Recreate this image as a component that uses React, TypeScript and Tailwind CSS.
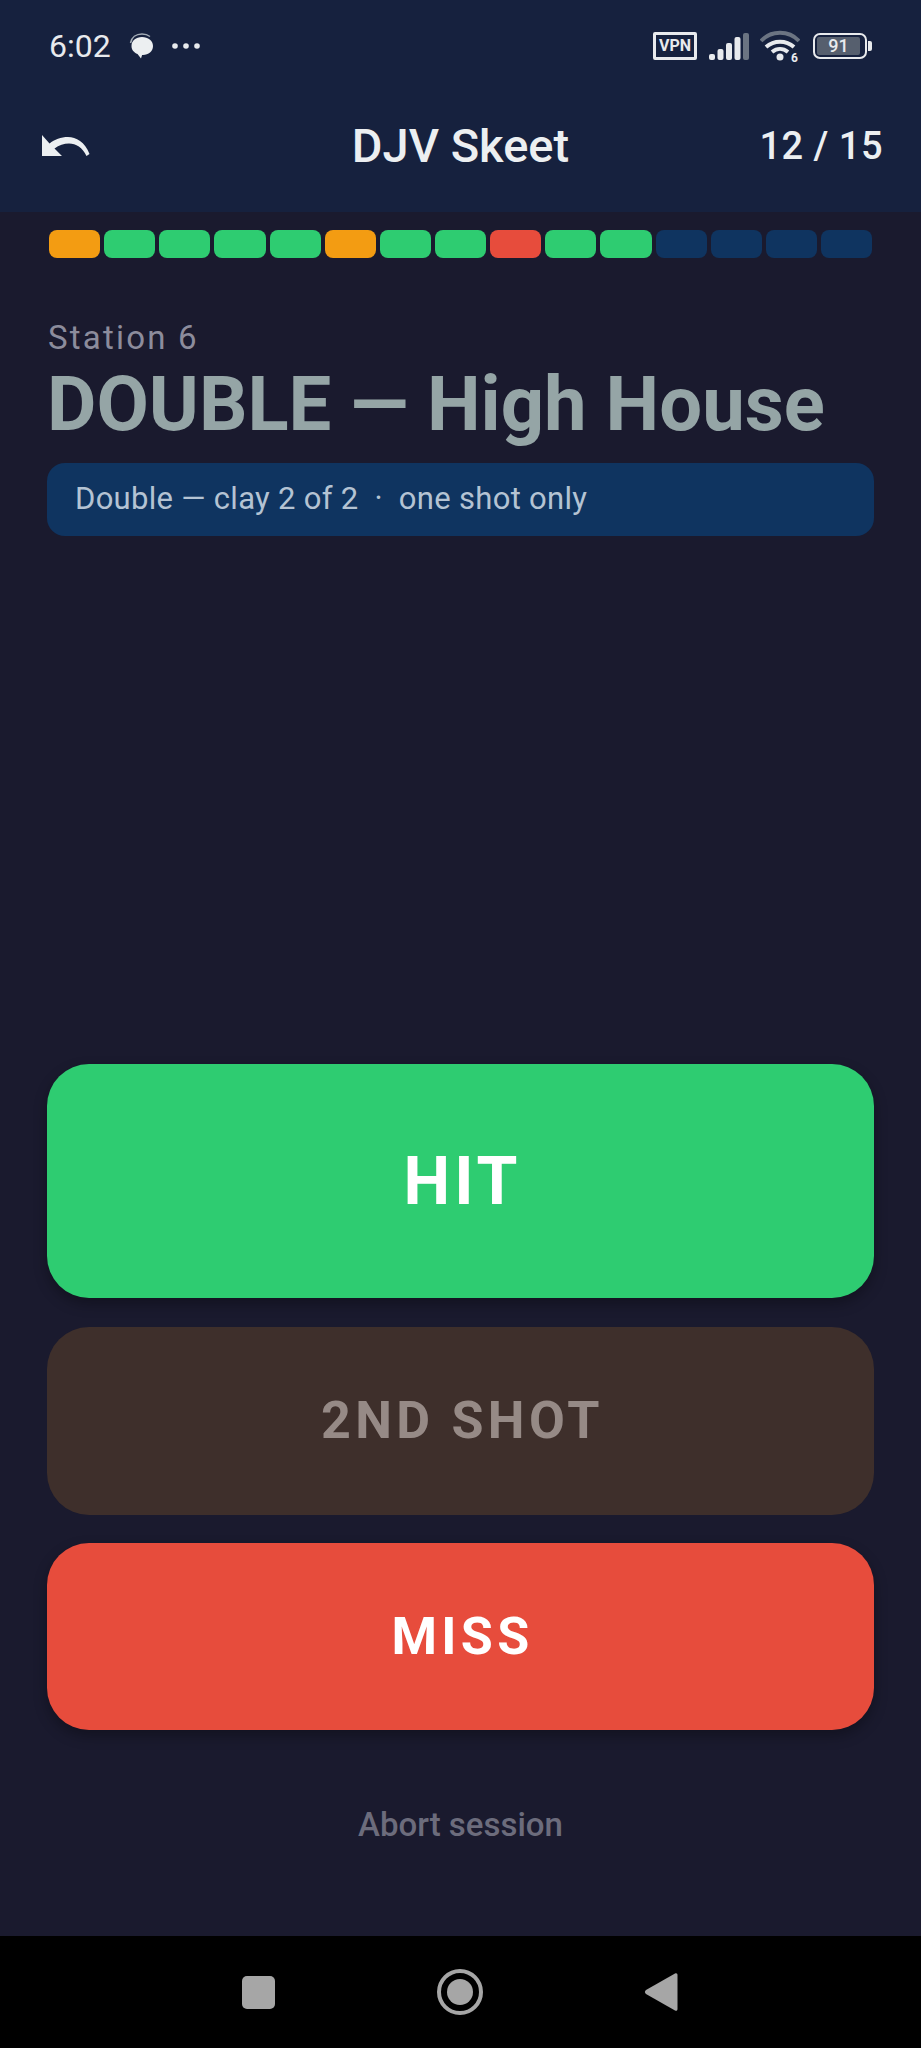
const shots = ['o', 'g', 'g', 'g', 'g', 'o', 'g', 'g', 'r', 'g', 'g', 'n', 'n', 'n', 'n'];

function Segment({ kind }: { kind: string }) {
  if (kind === 'o') return <div className="h-[28px] flex-1 rounded-[8px] bg-[#f39c12]" />;
  if (kind === 'g') return <div className="h-[28px] flex-1 rounded-[8px] bg-[#2ecc71]" />;
  if (kind === 'r') return <div className="h-[28px] flex-1 rounded-[8px] bg-[#e74c3c]" />;
  return <div className="h-[28px] flex-1 rounded-[8px] bg-[#0f3460]" />;
}

function StatusBar() {
  return (
    <div className="flex h-[92px] items-center justify-between pl-[49px] pr-[49px] text-[#e8eaed]">
      <div className="flex items-center">
        <span className="text-[32px] leading-none">6:02</span>
        <svg className="ml-[18px]" width="26" height="26" viewBox="0 0 26 26">
          <path d="M2.500 13c0-5.500 4.500-9 10.500-9s11 3.500 11 9-4.500 9-10 9c-.3 0-.6 0-.9 0l-1.100 3.500-3.500-4.500C5 19.500 2.500 17 2.500 13z" fill="#eceff1" />
          <path d="M1.500 10C2.500 4.500 7 1 13 1c3.500 0 6 1 8 2.500" stroke="#a3acb6" strokeWidth="1.500" fill="none" />
        </svg>
        <svg className="ml-[16px]" width="30" height="8" viewBox="0 0 30 8">
          <circle cx="4" cy="4" r="2.800" fill="#e8eaed" />
          <circle cx="15" cy="4" r="2.800" fill="#e8eaed" />
          <circle cx="26" cy="4" r="2.800" fill="#e8eaed" />
        </svg>
      </div>
      <div className="flex items-center">
        <div className="flex h-[28px] w-[44px] items-center justify-center rounded-[2px] border-[3px] border-[#e8eaed] text-[16px] font-bold leading-none">VPN</div>
        <svg className="ml-[12px]" width="40" height="28" viewBox="0 0 40 28">
          <rect x="0" y="22" width="6" height="6" rx="2" fill="#e8eaed" />
          <rect x="8.500" y="17" width="6" height="11" rx="2" fill="#e8eaed" />
          <rect x="17" y="11" width="6" height="17" rx="2" fill="#e8eaed" />
          <rect x="25.500" y="5" width="6" height="23" rx="2" fill="#e8eaed" />
          <rect x="34" y="1" width="6" height="27" rx="2" fill="#6b7482" />
        </svg>
        <svg className="ml-[11px]" width="40" height="40" viewBox="0 -3 40 40">
          <path d="M1 12C11 1 29 1 39 12" stroke="#6b7482" strokeWidth="4" fill="none" />
          <path d="M6 18C14 11 26 11 34 18" stroke="#e8eaed" strokeWidth="4" fill="none" />
          <path d="M12 23C17 19 23 19 28 23" stroke="#e8eaed" strokeWidth="4" fill="none" />
          <circle cx="20" cy="28" r="3.500" fill="#e8eaed" />
          <text x="31" y="33" fontSize="12" fontWeight="700" fill="#e8eaed" fontFamily="Roboto">6</text>
        </svg>
        <div className="ml-[13px] flex items-center">
          <div className="flex h-[26px] w-[54px] items-center rounded-[7px] border-[2.500px] border-[#e8eaed] p-[2px]">
            <div className="flex h-full w-[43px] items-center justify-center rounded-[2px] bg-[#565f6e] text-[18px] font-medium leading-none">91</div>
          </div>
          <div className="ml-[1px] h-[10px] w-[4px] rounded-r-[2px] bg-[#e8eaed]" />
        </div>
      </div>
    </div>
  );
}

function AppBar() {
  return (
    <div className="grid h-[120px] grid-cols-[1fr_auto_1fr] items-center pb-[13px] pl-[38px] pr-[38px] text-[#eceff1]">
      <svg className="ml-[3px]" width="50" height="24" viewBox="0 0 50 24">
        <path d="M1 1v21h20l-7.500-7.500C18 11 23 9.500 28 9.500c7 0 13.500 4 17.500 12.500l3-2C44 8 35 3 27 3c-7 0-13.500 2.500-18.500 6.500z" fill="#eceff1" />
      </svg>
      <div className="text-[47px] font-medium leading-[52px]">DJV Skeet</div>
      <div className="justify-self-end text-[38px] font-medium leading-none tracking-[0.500px]">12 / 15</div>
    </div>
  );
}

function NavBar() {
  return (
    <div className="flex h-[112px] items-center bg-black pl-[242px]">
      <div className="h-[33px] w-[33px] rounded-[5px] bg-[#a6a6a6]" />
      <div className="ml-[162px] flex h-[46px] w-[46px] items-center justify-center rounded-full border-[4px] border-[#a6a6a6]">
        <div className="h-[26px] w-[26px] rounded-full bg-[#a6a6a6]" />
      </div>
      <svg className="ml-[161px]" width="34" height="40" viewBox="0 0 34 40">
        <path d="M31 1.500c1.500-.8 2.500 0 2.500 1.500v34c0 1.500-1 2.300-2.500 1.500L2 22c-1.500-1-1.500-3 0-4z" fill="#a6a6a6" />
      </svg>
    </div>
  );
}

export default function App() {
  return (
    <div className="flex h-[2048px] w-[921px] flex-col bg-[#1a1a2e] font-['Roboto',sans-serif]">
      <div className="bg-[#16213e]">
        <StatusBar />
        <AppBar />
      </div>
      <div className="flex flex-1 flex-col px-[47px] pt-[18px]">
        <div className="flex gap-[4px] px-[2px]">
          {shots.map((kind, i) => (
            <Segment key={i} kind={kind} />
          ))}
        </div>
        <div className="mt-[62px] pl-[1px] text-[33px] leading-[36px] tracking-[2.200px] text-[#8c8c9c]">Station 6</div>
        <div className="mt-[5px] whitespace-nowrap text-[76px] font-bold leading-[86px] text-[#95a5a6]">DOUBLE — High House</div>
        <div className="mt-[16px] flex h-[73px] items-center rounded-[18px] bg-[#0f3460] px-[28px] text-[31px] tracking-[0.300px] text-[#b4c3d3]">
          Double — clay 2 of 2&nbsp; ·&nbsp; one shot only
        </div>
        <div className="flex-1" />
        <button className="h-[234px] rounded-[42px] bg-[#2ecc71] pl-[4px] text-[66px] font-bold tracking-[4px] text-white shadow-[0_6px_14px_rgba(0,0,0,0.3)]">HIT</button>
        <button className="mt-[29px] h-[188px] rounded-[42px] bg-[#3e2f2b] pl-[4px] text-[52px] font-bold tracking-[4.300px] text-[#968a86]">2ND SHOT</button>
        <button className="mt-[28px] h-[187px] rounded-[42px] bg-[#e74c3c] pl-[4px] text-[52px] font-bold tracking-[4.300px] text-white shadow-[0_6px_14px_rgba(0,0,0,0.3)]">MISS</button>
        <div className="mt-[77px] pb-[93px] text-center text-[33px] font-medium leading-[36px] text-[#6c6c7c]">Abort session</div>
      </div>
      <NavBar />
    </div>
  );
}
